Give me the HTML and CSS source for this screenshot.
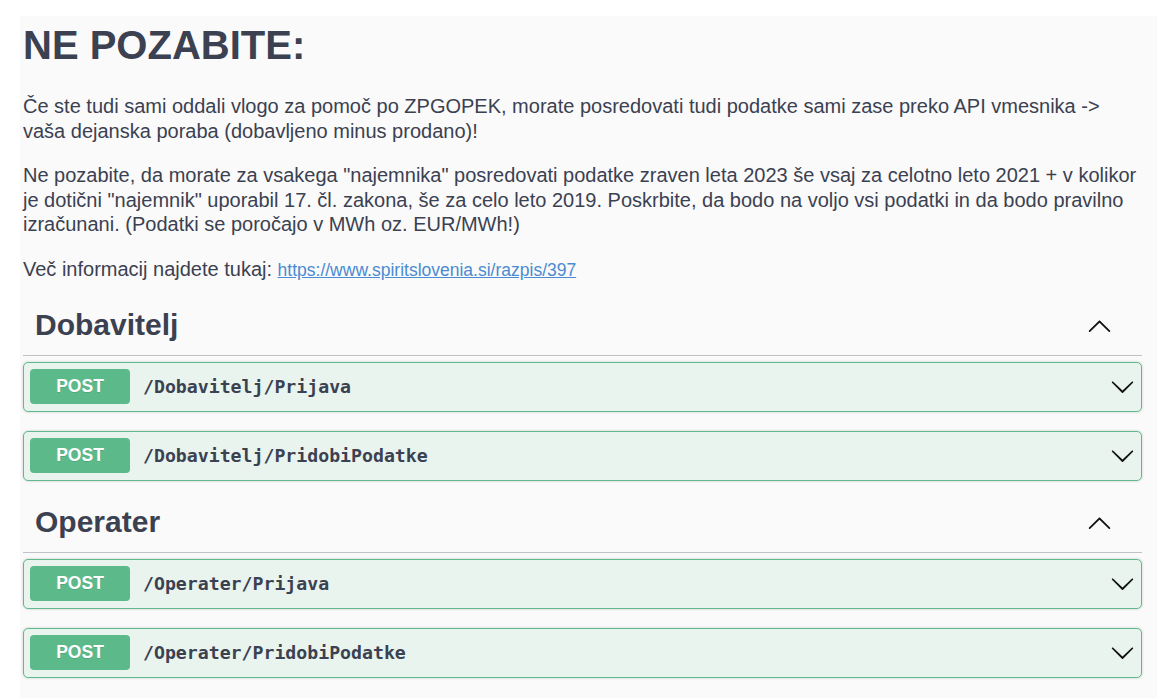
FILE: index.html
```html
<!DOCTYPE html>
<html lang="sl">
<head>
<meta charset="utf-8">
<title>API</title>
<link rel="stylesheet" href="styles.css">
</head>
<body>
<div class="page">
  <div class="description">
    <h1 class="title">NE POZABITE:</h1>
    <p>Če ste tudi sami oddali vlogo za pomoč po ZPGOPEK, morate posredovati tudi podatke sami zase preko API vmesnika -&gt; vaša dejanska poraba (dobavljeno minus prodano)!</p>
    <p>Ne pozabite, da morate za vsakega "najemnika" posredovati podatke zraven leta 2023 še vsaj za celotno leto 2021 + v kolikor je dotični "najemnik" uporabil 17. čl. zakona, še za celo leto 2019. Poskrbite, da bodo na voljo vsi podatki in da bodo pravilno izračunani. (Podatki se poročajo v MWh oz. EUR/MWh!)</p>
    <p>Več informacij najdete tukaj: <a class="link" href="#">https://www.spiritslovenia.si/razpis/397</a></p>
  </div>

  <section class="tag-section">
    <div class="tag-header">
      <h3 class="tag-title">Dobavitelj</h3>
      <svg class="arrow" viewBox="0 0 20 20" width="25" height="25"><path d="M17.418 14.908c.272.268.709.268.979 0s.271-.701 0-.969l-7.908-7.83c-.27-.268-.707-.268-.979 0l-7.908 7.830c-.27.268-.27.701 0 .969.271.268.709.268.979 0L10 7.767l7.418 7.141z"/></svg>
    </div>
    <div class="ops">
      <div class="opblock">
        <span class="method">POST</span>
        <span class="path">/Dobavitelj/Prijava</span>
        <svg class="arrow" viewBox="0 0 20 20" width="25" height="25"><path d="M17.418 6.109c.272-.268.709-.268.979 0s.271.701 0 .969l-7.908 7.83c-.27.268-.707.268-.979 0l-7.908-7.83c-.27-.268-.27-.701 0-.969.271-.268.709-.268.979 0L10 13.25l7.418-7.141z"/></svg>
      </div>
      <div class="opblock">
        <span class="method">POST</span>
        <span class="path">/Dobavitelj/PridobiPodatke</span>
        <svg class="arrow" viewBox="0 0 20 20" width="25" height="25"><path d="M17.418 6.109c.272-.268.709-.268.979 0s.271.701 0 .969l-7.908 7.83c-.27.268-.707.268-.979 0l-7.908-7.83c-.27-.268-.27-.701 0-.969.271-.268.709-.268.979 0L10 13.25l7.418-7.141z"/></svg>
      </div>
    </div>
  </section>

  <section class="tag-section">
    <div class="tag-header">
      <h3 class="tag-title">Operater</h3>
      <svg class="arrow" viewBox="0 0 20 20" width="25" height="25"><path d="M17.418 14.908c.272.268.709.268.979 0s.271-.701 0-.969l-7.908-7.83c-.27-.268-.707-.268-.979 0l-7.908 7.83c-.27.268-.27.701 0 .969.271.268.709.268.979 0L10 7.767l7.418 7.141z"/></svg>
    </div>
    <div class="ops">
      <div class="opblock">
        <span class="method">POST</span>
        <span class="path">/Operater/Prijava</span>
        <svg class="arrow" viewBox="0 0 20 20" width="25" height="25"><path d="M17.418 6.109c.272-.268.709-.268.979 0s.271.701 0 .969l-7.908 7.83c-.27.268-.707.268-.979 0l-7.908-7.83c-.27-.268-.27-.701 0-.969.271-.268.709-.268.979 0L10 13.25l7.418-7.141z"/></svg>
      </div>
      <div class="opblock">
        <span class="method">POST</span>
        <span class="path">/Operater/PridobiPodatke</span>
        <svg class="arrow" viewBox="0 0 20 20" width="25" height="25"><path d="M17.418 6.109c.272-.268.709-.268.979 0s.271.701 0 .969l-7.908 7.83c-.27.268-.707.268-.979 0l-7.908-7.83c-.27-.268-.27-.701 0-.969.271-.268.709-.268.979 0L10 13.25l7.418-7.141z"/></svg>
      </div>
    </div>
  </section>
</div>
</body>
</html>
```

FILE: styles.css
```css
html, body {
  margin: 0;
  padding: 0;
  background: #ffffff;
}

body {
  font-family: "Liberation Sans", Arial, sans-serif;
  color: #3b4151;
  overflow: hidden;
}

.page {
  margin: 16px 11px 0 20px;
  padding: 6px 15px 40px 3px;
  background: #fafafa;
  min-height: 700px;
}

.description .title {
  margin: 0 0 26px 0;
  font-size: 40px;
  line-height: 46px;
  font-weight: 700;
  color: #3b4151;
}

.description p {
  margin: 0 0 20px 0;
  font-size: 20px;
  line-height: 24.5px;
}

.description p:last-child {
  margin-bottom: 21px;
}

.link {
  color: #4a8bd1;
  font-size: 17.5px;
  text-decoration: underline;
}

.tag-header {
  display: flex;
  align-items: center;
  justify-content: space-between;
  padding: 5px 30px 13px 12px;
  border-bottom: 1px solid rgba(59, 65, 81, 0.3);
  margin-bottom: 6px;
}

.tag-title {
  margin: 0;
  font-size: 30px;
  line-height: 34px;
  font-weight: 700;
  color: #3b4151;
}

.arrow {
  display: block;
  flex: none;
  fill: #111;
}

.opblock {
  display: flex;
  align-items: center;
  margin: 0 0 19px 0;
  padding: 6px 6px 7px 6px;
  border: 1px solid #5fbb8e;
  border-radius: 5px;
  background: #e8f4ed;
  box-shadow: 0 0 3px rgba(0, 0, 0, 0.19);
}

.method {
  flex: none;
  width: 100px;
  height: 35px;
  display: flex;
  align-items: center;
  justify-content: center;
  border-radius: 4px;
  background: #5cb98a;
  color: #ffffff;
  font-family: "Liberation Sans", Arial, sans-serif;
  font-size: 17.5px;
  font-weight: 700;
  text-shadow: 0 1px 0 rgba(0, 0, 0, 0.1);
}

.path {
  flex: 1;
  padding: 0 12.5px 0 13px;
  font-family: "DejaVu Sans Mono", "Liberation Mono", monospace;
  font-size: 18.2px;
  font-weight: 700;
  color: #3b4151;
}
```
